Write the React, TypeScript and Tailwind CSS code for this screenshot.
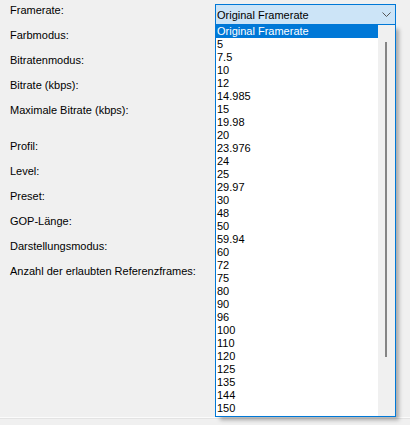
import React from "react";

const group1 = ["Framerate:", "Farbmodus:", "Bitratenmodus:", "Bitrate (kbps):", "Maximale Bitrate (kbps):"];
const group2 = ["Profil:", "Level:", "Preset:", "GOP-Länge:", "Darstellungsmodus:", "Anzahl der erlaubten Referenzframes:"];
const items = [
  "Original Framerate", "5", "7.5", "10", "12", "14.985", "15", "19.98", "20", "23.976",
  "24", "25", "29.97", "30", "48", "50", "59.94", "60", "72", "75",
  "80", "90", "96", "100", "110", "120", "125", "135", "144", "150",
];

export default function App() {
  return (
    <div className="w-[410px] h-[425px] bg-[#f0f0f0] overflow-hidden font-['Liberation_Sans',Arial,sans-serif] text-[11px] leading-[13px] text-black">
      <div className="h-[417px] flex">
        <div className="w-[215px] pl-[10px] pt-[4px] flex flex-col">
          {group1.map((l) => (
            <div key={l} className="h-[25px] whitespace-nowrap">{l}</div>
          ))}
          <div className="h-[11px]" />
          {group2.map((l) => (
            <div key={l} className="h-[25px] whitespace-nowrap">{l}</div>
          ))}
        </div>
        <div className="w-[181px] pt-[4px] relative">
          <div className="h-[21px] border border-[#0078d7] bg-[#cce4f7] flex items-center justify-between pl-px pt-px">
            <span>Original Framerate</span>
            <svg width="9" height="5" viewBox="0 0 9 5" className="mr-[4px] mb-px">
              <polyline points="0.5,0.5 4.5,4.5 8.5,0.5" fill="none" stroke="#555" strokeWidth="1" />
            </svg>
          </div>
          <div className="absolute left-0 top-[24px] w-[181px] h-[393px] border border-[#0078d7] bg-white flex shadow-[4px_4px_4px_-1px_rgba(0,0,0,0.3)]">
            <div className="flex-1 flex flex-col">
              {items.map((it, i) => (
                <div
                  key={it}
                  className={
                    i === 0
                      ? "h-[13px] pl-px bg-[#0078d7] text-white whitespace-nowrap"
                      : "h-[13px] pl-px whitespace-nowrap"
                  }
                >
                  {it}
                </div>
              ))}
            </div>
            <div className="w-[17px] bg-[#f0f0f0]">
              <div className="mt-[17px] ml-[7px] w-[2px] h-[315px] bg-[#858585]" />
            </div>
          </div>
        </div>
      </div>
      <div className="h-px bg-[#fbfbfb]" />
      <div className="h-px bg-[#e3e3e3]" />
    </div>
  );
}
